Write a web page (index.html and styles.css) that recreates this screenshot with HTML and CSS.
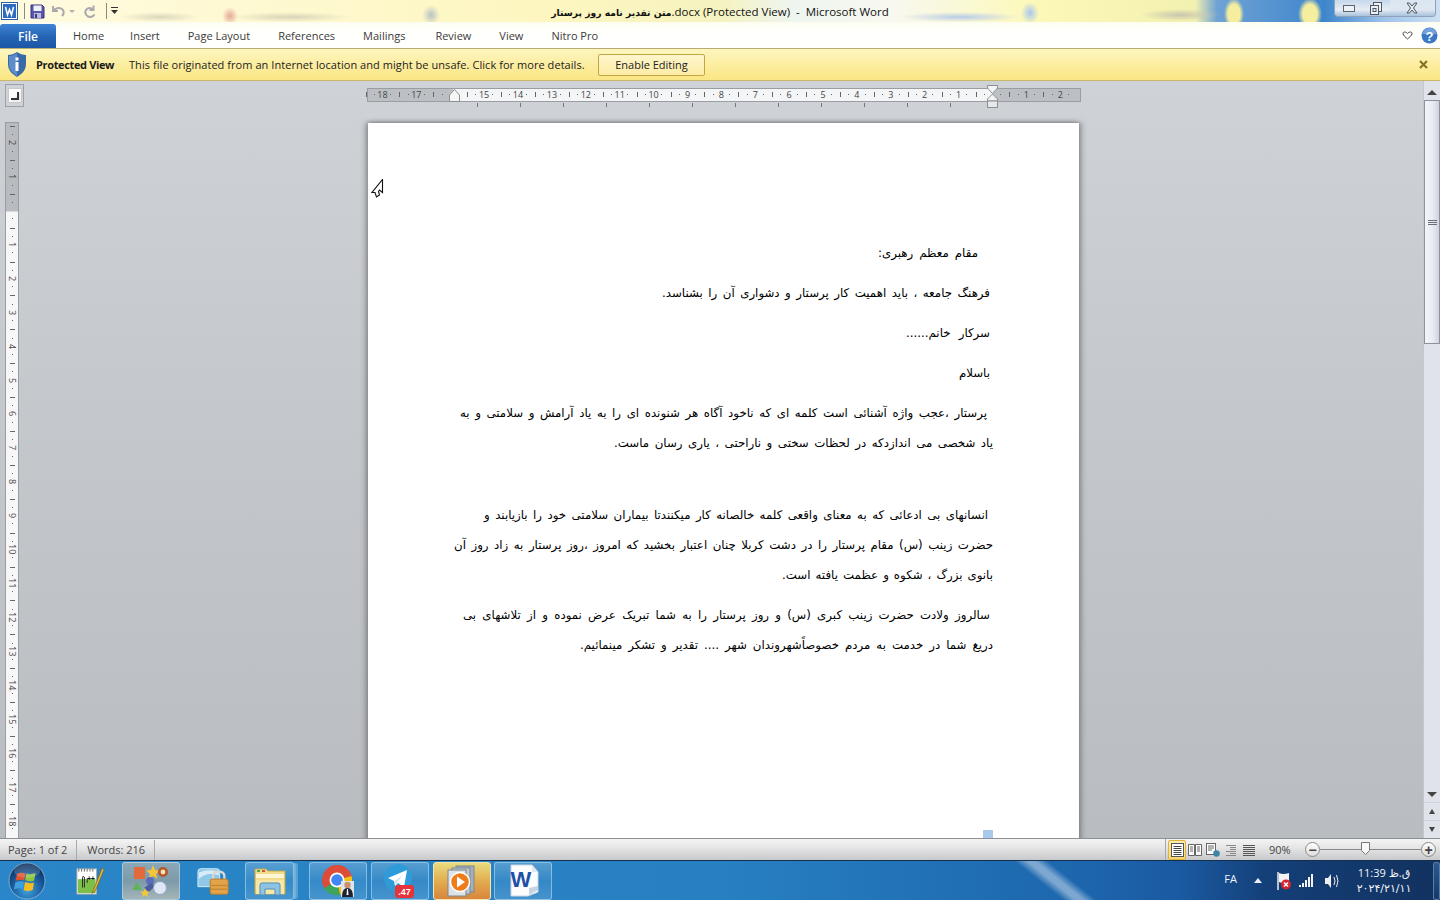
FILE: index.html
```html
<!DOCTYPE html>
<html lang="en">
<head>
<meta charset="utf-8">
<title>Microsoft Word</title>
<link rel="stylesheet" href="styles.css">
</head>
<body>
<header class="titlebar">
  <div class="qat">
    <svg class="ic-w" width="17" height="18" viewBox="0 0 17 18"><rect x=".5" y=".5" width="16" height="17" fill="#fff" stroke="#2b5fa8"/><rect x="2" y="2" width="13" height="14" fill="#2f6cc0"/><path d="M3.5 5l2 8 2-5.500 2 5.500 2-8" transform="translate(1)" fill="none" stroke="#fff" stroke-width="1.500"/></svg>
    <span class="qat-sep"></span>
    <svg class="ic-save" width="15" height="15" viewBox="0 0 15 15"><path d="M1 1h11l2 2v11H1z" fill="#5a57a8" stroke="#34327c"/><rect x="3.500" y="1.500" width="8" height="5.500" fill="#eef0fa"/><rect x="4" y="9" width="7" height="5" fill="#b9bce0"/><rect x="5" y="10" width="2" height="4" fill="#3c3a85"/></svg>
    <svg class="ic-undo" width="15" height="14" viewBox="0 0 15 14"><path d="M2 2v5h5M2.500 6.500C5 3.500 9 3 11.500 5.500c1.500 1.800 1.300 4.500-.5 6.500" fill="none" stroke="#a9a9ae" stroke-width="2"/></svg>
    <span class="qat-caret"></span>
    <svg class="ic-redo" width="14" height="14" viewBox="0 0 14 14"><path d="M10.500 1.500v4.500h-4M10 5.500C7.800 3.300 4.500 3.500 3 6c-1.400 2.500-.3 5 2 6.500 2.500 1 5 .3 6.500-2" fill="none" stroke="#a9a9ae" stroke-width="2"/></svg>
    <span class="qat-sep qat-sep-b"></span>
    <svg class="ic-cust" width="7" height="8" viewBox="0 0 7 8"><rect y="0" width="7" height="1" fill="#333"/><path d="M0 3h7L3.500 7z" fill="#333"/></svg>
  </div>
  <div class="doc-title"><bdi class="title-fa">متن تقدیر نامه روز پرستار</bdi><span>.docx (Protected View)&nbsp; -&nbsp; Microsoft Word</span></div>
  <div class="winctl">
    <span class="wbtn wbtn-min"><svg width="12" height="7" viewBox="0 0 12 7"><rect x=".5" y=".5" width="11" height="6" fill="#eef1f6" stroke="#5c6570"/></svg></span>
    <span class="wbtn wbtn-max"><svg width="12" height="13" viewBox="0 0 12 13"><rect x="3.500" y=".5" width="8" height="9" fill="#eef1f6" stroke="#4f5862"/><rect x=".5" y="3.500" width="8" height="9" fill="#eef1f6" stroke="#4f5862"/><rect x="3" y="6.500" width="3" height="3" fill="none" stroke="#4f5862"/></svg></span>
    <span class="wbtn wbtn-close"><svg width="14" height="12" viewBox="0 0 14 12"><path d="M2 1h2.500L7 4l2.500-3H12L8.500 6 12 11H9.500L7 8l-2.500 3H2L5.500 6z" fill="#e8ebf0" stroke="#4b5660"/></svg></span>
  </div>
</header>

<nav class="ribbon">
  <span class="tab-file">File</span>
  <div class="tabs">
    <span>Home</span><span>Insert</span><span>Page Layout</span><span>References</span><span>Mailings</span><span>Review</span><span>View</span><span>Nitro Pro</span>
  </div>
  <div class="ribbon-end">
    <svg width="11" height="9" viewBox="0 0 11 9"><path d="M1 2.500C1 .5 4 .5 5.500 2.500 7 .5 10 .5 10 2.500 10 4.500 7 6.500 5.500 8 4 6.500 1 4.500 1 2.500z" fill="#fff" stroke="#444"/></svg>
    <svg width="17" height="17" viewBox="0 0 17 17"><circle cx="8.500" cy="8.500" r="8" fill="#3b78c4"/><path d="M1.500 7a7 6 0 0 1 14 0z" fill="#8db4e6" opacity=".7"/><text x="8.500" y="13.500" text-anchor="middle" class="help-q">?</text></svg>
  </div>
</nav>

<section class="msgbar">
  <svg class="shield" width="18" height="25" viewBox="0 0 18 25"><path d="M9 0c3 2 6 3 9 3v9c0 6-4 10-9 13C4 22 0 18 0 12V3c3 0 6-1 9-3z" fill="#3a69a8"/><path d="M9 1v23C4.500 21 1 17.500 1 12V4c3 0 5.500-1 8-3z" fill="#5d8ccb"/><rect x="7.500" y="10" width="3" height="9" fill="#fff"/><rect x="7.500" y="5.500" width="3" height="3" fill="#fff"/></svg>
  <strong class="msg-title">Protected View</strong>
  <span class="msg-text">This file originated from an Internet location and might be unsafe. Click for more details.</span>
  <span class="msg-btn">Enable Editing</span>
  <svg class="msg-x" width="9" height="9" viewBox="0 0 9 9"><path d="M1 1l7 7M8 1L1 8" stroke="#8a7420" stroke-width="2.200"/></svg>
</section>

<main class="workspace">
  <aside class="rail">
    <span class="corner"><span class="corner-in"></span></span>
    <div class="v-ruler">
      <span>2</span><span>1</span><span></span><span>1</span><span>2</span><span>3</span><span>4</span><span>5</span><span>6</span><span>7</span><span>8</span><span>9</span><span>10</span><span>11</span><span>12</span><span>13</span><span>14</span><span>15</span><span>16</span><span>17</span><span>18</span>
    </div>
  </aside>

  <div class="canvas">
    <div class="h-ruler">
      <span>18</span><span>17</span><span></span><span>15</span><span>14</span><span>13</span><span>12</span><span>11</span><span>10</span><span>9</span><span>8</span><span>7</span><span>6</span><span>5</span><span>4</span><span>3</span><span>2</span><span>1</span><span></span><span>1</span><span>2</span>
      <svg class="mark-left" width="11" height="13" viewBox="0 0 11 13"><path d="M5.500 .5l5 5.500v6.500H.5V6z" fill="#f6f6f6" stroke="#8b8f94"/></svg>
      <svg class="mark-right" width="11" height="23" viewBox="0 0 11 23"><path d="M.5.5h10V3l-5 5.500L.5 3zM5.500 9l5 5v2H.5v-2z" fill="#f4f4f4" stroke="#8b8f94"/><rect x=".5" y="16" width="10" height="6.500" fill="#e8e8e8" stroke="#8b8f94"/></svg>
    </div>
    <article class="page" dir="rtl">
      <svg class="pointer" width="13" height="20" viewBox="0 0 13 20"><path d="M11.500 1v13l-3-2.500-1 1.500 1 3.500-3 2-1.500-4.500L1 14z" transform="translate(0 -.5)" fill="#fff" stroke="#111" stroke-width="1.100"/></svg>
      <p class="ln ln-a">مقام  معظم رهبری:</p>
      <p class="ln ln-b">فرهنگ جامعه ، باید اهمیت کار پرستار و دشواری آن را بشناسد.</p>
      <p class="ln ln-c">سرکار خانم......</p>
      <p class="ln ln-d">باسلام</p>
      <div class="para">
        <p class="ln ln-e">پرستار ،عجب واژه آشنائی است   کلمه ای که ناخود آگاه هر شنونده ای را به یاد  آرامش و سلامتی و به</p>
        <p class="ln ln-f">یاد شخصی می اندازدکه در لحظات سختی و ناراحتی ، یاری  رسان ماست.</p>
      </div>
      <div class="para para-gap">
        <p class="ln ln-g">انسانهای بی ادعائی که به معنای واقعی کلمه خالصانه کار میکنندتا بیماران سلامتی  خود را بازیابند و</p>
        <p class="ln ln-h">حضرت زینب (س) مقام پرستار را در دشت کربلا چنان اعتبار بخشید که امروز ،روز پرستار  به زاد روز آن</p>
        <p class="ln ln-i">بانوی بزرگ ، شکوه و عظمت یافته است.</p>
      </div>
      <div class="para">
        <p class="ln ln-j">سالروز ولادت حضرت زینب کبری (س) و روز پرستار را به شما تبریک عرض نموده و از  تلاشهای بی</p>
        <p class="ln ln-k">دریغ شما در خدمت به مردم خصوصاًشهروندان شهر .... تقدیر و تشکر  مینمائیم.</p>
      </div>
      <span class="page-mark"></span>
    </article>
  </div>

  <aside class="scroll">
    <span class="sb-btn"><i class="tri-up"></i></span>
    <span class="sb-thumb"><i></i><i></i><i></i></span>
    <span class="sb-track"></span>
    <span class="sb-btn sb-down"><i class="tri-down"></i></span>
    <span class="sb-btn sb-page"><i class="tri-up tri-s"></i></span>
    <span class="sb-btn sb-page"><i class="tri-down tri-s"></i></span>
  </aside>
</main>

<footer class="status">
  <span class="st-cell">Page: 1 of 2</span>
  <span class="st-cell">Words: 216</span>
  <div class="st-right">
    <span class="view view-on"><svg width="13" height="14" viewBox="0 0 13 14"><rect x=".5" y=".5" width="12" height="13" fill="#fff" stroke="#555"/><path d="M2.500 3.500h8M2.500 5.500h8M2.500 7.500h8M2.500 9.500h8M2.500 11.500h8" stroke="#444"/></svg></span>
    <span class="view"><svg width="14" height="13" viewBox="0 0 14 13"><path d="M.5 1.500h6v11h-6zM7.500 1.500h6v11h-6z" fill="#fff" stroke="#666"/><path d="M2 4h3M2 6h3M2 8h3M9 4h3M9 6h3M9 8h3" stroke="#666"/></svg></span>
    <span class="view"><svg width="14" height="14" viewBox="0 0 14 14"><rect x=".5" y=".5" width="9" height="11" fill="#fff" stroke="#666"/><path d="M2 3h6M2 5h6M2 7h4" stroke="#666"/><circle cx="10.500" cy="10.500" r="3.300" fill="#3d86a8"/></svg></span>
    <span class="view"><svg width="12" height="12" viewBox="0 0 12 12"><path d="M1 1.500h10M5 3.500h6M5 5.500h6M1 7.500h10M5 9.500h6M1 11.500h10" stroke="#888"/></svg></span>
    <span class="view"><svg width="12" height="12" viewBox="0 0 12 12"><path d="M0 1.500h12M0 3.500h12M0 5.500h12M0 7.500h12M0 9.500h12M0 11.500h12" stroke="#555"/></svg></span>
    <span class="zoom-pct">90%</span>
    <span class="zoom-btn">&minus;</span>
    <span class="zoom-track"><svg class="zoom-thumb" width="9" height="13" viewBox="0 0 9 13"><path d="M.5.5h8v8l-4 4-4-4z" fill="#f8f8f8" stroke="#777"/></svg></span>
    <span class="zoom-btn">+</span>
  </div>
</footer>

<footer class="taskbar">
  <svg class="orb" width="38" height="38" viewBox="0 0 38 38"><defs><radialGradient id="orbg" cx=".5" cy=".75" r=".7"><stop offset="0" stop-color="#3fa4de"/><stop offset=".6" stop-color="#1a5a9c"/><stop offset="1" stop-color="#0c2f5c"/></radialGradient></defs><circle cx="19" cy="19" r="18" fill="url(#orbg)" stroke="#9fc4e2" stroke-opacity=".7"/><path d="M9 12q4-2 8.500-.5l-1.300 7q-4-1.500-8.700.5z" fill="#e2532d"/><path d="M18.500 11.500q4 1.500 9-.5l-1.300 7.500q-4.500 2-9-.5z" fill="#8cc63f"/><path d="M7.300 20.500q4.500-2 8.700-.5l-1.300 7q-4-1.500-8.700.5z" fill="#3fa0e0"/><path d="M17 20q4.500 2 9 .5L24.700 28q-4.500 2-9 .3z" fill="#f5bd1f"/><ellipse cx="19" cy="9" rx="13" ry="7" fill="#fff" opacity=".16"/></svg>

  <span class="tb tb-plain tb-np"><svg width="30" height="32" viewBox="0 0 30 32"><rect x="1" y="3" width="21" height="27" fill="#fff" stroke="#aaa"/><rect x="2" y="14" width="19" height="15" fill="#7cc04a"/><path d="M3 3v3M6 3v3M9 3v3M12 3v3M15 3v3M18 3v3" stroke="#666"/><path d="M7 23V12q0-2 2 0v11M12 18v-5" stroke="#222" fill="none"/><text x="12" y="16" class="np-t">++</text><path d="M28 2L19 25l-2 4 3.500-2L30 4z" fill="#e8b83a" stroke="#7a5a10" stroke-width=".7"/></svg></span>

  <span class="tb tb-on"><svg width="40" height="34" viewBox="0 0 40 34"><rect x="3" y="3" width="11" height="12" fill="#e26a3a"/><path d="M22 1l2 5 5 .5-4 3.500 1.500 5-4.500-3-4.500 3L19 10l-4-3.500 5-.5z" fill="#f3c63c"/><circle cx="32" cy="8" r="5" fill="#b8562c"/><circle cx="32" cy="8" r="2.400" fill="#f2e4b4"/><path d="M6 18l5 8H1z" fill="#62b25d"/><circle cx="19" cy="17" r="4" fill="#5b6cb8"/><path d="M13 24l7-5 4 3-6 6z" fill="#4a5d9c"/><circle cx="29" cy="24" r="6.500" fill="#dfe6f4" stroke="#92a4c8"/><path d="M10 26l1.500 3.500 3.500.3-2.700 2.200.8 3-3.100-1.800L7 35l.8-3-2.700-2.200 3.500-.3z" transform="translate(4 -2)" fill="#f3c63c"/></svg></span>

  <span class="tb tb-plain tb-lock"><svg width="36" height="32" viewBox="0 0 36 32"><path d="M1 6q0-3 3-3h17q3 0 3 3v16H1z" fill="#8fc8e8" stroke="#d9eef8"/><path d="M2 7q10-4 21-1v4Q10 6 2 14z" fill="#e8f5fb" opacity=".8"/><path d="M17 15v-4q0-5 6-5t6 5v4" fill="none" stroke="#d8d8d8" stroke-width="2.500"/><rect x="14" y="14" width="19" height="16" rx="2" fill="#e2a34b" stroke="#b97b25"/><rect x="15" y="20" width="17" height="1.500" fill="#c78930"/><rect x="15" y="24" width="17" height="1.500" fill="#c78930"/></svg></span>

  <span class="tb tb-stack"><svg width="32" height="30" viewBox="0 0 32 30"><path d="M1 3h11l2 2h17v23H1z" fill="#f2dc8b" stroke="#c2a94f"/><rect x="3" y="4" width="3" height="2" fill="#4caa4c"/><rect x="8" y="4" width="3" height="2" fill="#d2553f"/><rect x="2" y="8" width="28" height="4" fill="#fdf6d2"/><rect x="2" y="14" width="28" height="14" fill="#f7e6a4"/><path d="M6 29v-10q0-2 2-2h16q2 0 2 2v10h-5v-6H11v6z" fill="#8ec3e4" stroke="#4c8fbd"/></svg></span>

  <span class="tb"><svg width="34" height="34" viewBox="0 0 34 34"><circle cx="16" cy="16" r="15" fill="#dd4b39"/><path d="M16 16L3 24.500A15 15 0 0 0 19 30.700z" fill="#3ba55c"/><path d="M16 16l3 14.700A15 15 0 0 0 30.500 12z" fill="#f4c20d"/><path d="M16 1a15 15 0 0 1 14.500 11H16z" fill="#dd4b39"/><circle cx="16" cy="16" r="7.500" fill="#fff"/><circle cx="16" cy="16" r="5.800" fill="#4285f4"/><rect x="20" y="17" width="13" height="16" fill="#dfe3ea"/><circle cx="26.500" cy="21" r="3.200" fill="#c99372"/><path d="M21 33q0-9 5.500-9t5.500 9z" fill="#1d2330"/><path d="M26 25l1 0 .5 6h-2z" fill="#fff"/></svg></span>

  <span class="tb"><svg width="38" height="36" viewBox="0 0 38 36"><circle cx="17" cy="15" r="14" fill="#2f9bd8"/><path d="M7 15l19-8-3 17-6-4-3 3-1-5z" fill="#fff"/><path d="M14 18l8-6-6 7-1 4z" fill="#c9dff0"/><rect x="14" y="22" width="19" height="13" rx="3" fill="#e5343c"/><text x="23.500" y="32" text-anchor="middle" class="tg-t">.47</text></svg></span>

  <span class="tb tb-hot"><svg width="30" height="32" viewBox="0 0 30 32"><rect x="9" y="1" width="18" height="26" fill="#a6b0b8" stroke="#7b8791"/><rect x="5" y="3" width="18" height="26" fill="#c2cad0" stroke="#7b8791"/><rect x="1" y="5" width="18" height="26" fill="#dfe3e6" stroke="#7b8791"/><circle cx="13" cy="17" r="9.500" fill="#ef7b1a" stroke="#fff" stroke-width="1.500"/><path d="M10 11.500l8 5.500-8 5.500z" fill="#fff"/></svg></span>

  <span class="tb tb-word"><svg width="32" height="33" viewBox="0 0 32 33"><path d="M4 1h21l6 7v20l-10 4H4z" fill="#fdfdfe" stroke="#c8d4e2"/><path d="M22 31l9-5v-4l-9 2z" fill="#c7d3e2"/><path d="M25 1v7h6" fill="#dfe7f1"/><text x="14" y="23" text-anchor="middle" class="wd-t">W</text></svg></span>

  <div class="tray">
    <span class="tray-lang">FA</span>
    <i class="tray-tri"></i>
    <svg class="tray-ic tray-flag" width="14" height="18" viewBox="0 0 14 18"><path d="M1 0v18" stroke="#eee" stroke-width="1.500"/><path d="M2 1q4 2 10 0v9q-6 2-10 0z" fill="#f4f4f4"/><circle cx="9" cy="12.500" r="5" fill="#d9242c"/><path d="M7 10.500l4 4M11 10.500l-4 4" stroke="#fff" stroke-width="1.500"/></svg>
    <svg class="tray-ic tray-sig" width="15" height="13" viewBox="0 0 15 13"><path d="M1 11h2v2H1zM4 9h2v4H4zM7 6h2v7H7zM10 3h2v10h-2zM13 0h2v13h-2z" fill="#f2f2f2"/></svg>
    <svg class="tray-ic tray-vol" width="14" height="16" viewBox="0 0 14 16"><path d="M0 5h3l3-4v14l-3-4H0z" fill="#eee"/><path d="M9 4q2 4 0 8M11.500 2q3 6 0 12" fill="none" stroke="#eee"/></svg>
    <div class="clock">
      <span class="clock-t">11:39 ق.ظ</span>
      <span class="clock-d">۲۰۲۴/۲۱/۱۱</span>
    </div>
    <span class="show-desk"></span>
  </div>
</footer>
</body>
</html>
```

FILE: styles.css
```css
* { box-sizing: border-box; }
html, body { margin: 0; height: 100%; }
body {
  width: 1440px;
  height: 900px;
  overflow: hidden;
  display: flex;
  flex-direction: column;
  font-family: "Open Sans", "DejaVu Sans", sans-serif;
  font-size: 11px;
  color: #3b3b3b;
  background: #c9cdd1;
}

/* title bar */
.titlebar {
  height: 22px;
  flex: none;
  display: grid;
  grid-template-columns: 1fr auto 1fr;
  align-items: start;
  background:
    radial-gradient(ellipse 10px 16px at 1234px 14px, #f4ee9e 60%, transparent 100%),
    radial-gradient(ellipse 12px 16px at 1310px 14px, #f4ee9e 60%, transparent 100%),
    radial-gradient(ellipse 40px 6px at 1180px 15px, #c9c6ae, transparent),
    radial-gradient(ellipse 9px 11px at 1030px 13px, #a8c6ec, transparent),
    radial-gradient(ellipse 60px 5px at 960px 17px, #b9cce8, transparent),
    radial-gradient(ellipse 8px 9px at 230px 16px, #e6a89a, transparent),
    radial-gradient(ellipse 60px 5px at 290px 17px, #d8d4b8, transparent),
    radial-gradient(ellipse 40px 5px at 160px 17px, #dcd8bc, transparent),
    radial-gradient(ellipse 9px 10px at 431px 15px, #b9c3c4, transparent),
    linear-gradient(90deg, #fffbe0 0, #fdf6c0 38%, #f6f3c0 50%, #eef5ef 55%, #f8f8f0 62%, #fcf9b8 72%, #f3f1b0 83%, #6fa2d4 84.500%, #3e86cc 92%, #9cc2ea 96%, #cfe0f4 100%);
}
.qat { display: flex; align-items: center; height: 22px; padding-left: 1px; }
.ic-w { margin-right: 3px; }
.qat-sep { width: 1px; height: 16px; background: #8a8a80; margin: 0 5px 0 3px; }
.ic-save { margin-right: 6px; }
.ic-undo { margin-right: 3px; }
.qat-caret { width: 0; height: 0; border: 3px solid transparent; border-top: 3px solid #b0b0b0; border-bottom: 0; margin-right: 8px; }
.qat-sep-b { margin: 0 4px 0 9px; }
.doc-title {
  font-size: 11.500px;
  color: #111;
  line-height: 24px;
  white-space: nowrap;
}
.title-fa { font-family: "DejaVu Sans", sans-serif; font-weight: 700; font-size: 9.200px; }
.winctl {
  justify-self: end;
  margin-right: 4px;
  width: 102px;
  height: 17px;
  display: flex;
  border: 1px solid #8ea3b8;
  border-top: 0;
  border-radius: 0 0 4px 4px;
  background: linear-gradient(180deg, #c6d8ea, #e6edf5 60%, #a9c2dc);
}
.wbtn { display: flex; align-items: center; justify-content: center; width: 28px; }
.wbtn-close { width: 46px; background: linear-gradient(180deg, rgba(255,255,255,.35), rgba(170,195,220,.3)); }

/* ribbon tabs */
.ribbon {
  height: 26px;
  flex: none;
  display: flex;
  align-items: stretch;
  background: linear-gradient(180deg, #fdfcf0 0, #fffffb 30%, #ffffff 100%);
}
.tab-file {
  width: 56px;
  margin-top: 2px;
  display: flex;
  align-items: center;
  justify-content: center;
  color: #fff;
  font-size: 12px;
  font-weight: 600;
  border-radius: 3px 3px 0 0;
  background: linear-gradient(180deg, #3f85d3 0, #2463b4 55%, #1c57a5 100%);
}
.tabs { display: flex; align-items: center; gap: 28px; padding-left: 17px; flex: 1; white-space: nowrap; }
.tabs span:first-child { margin-right: -2px; }
.tabs span:nth-child(5) { margin-right: 2px; }
.ribbon-end { display: flex; align-items: center; gap: 8px; padding-right: 2px; }
.help-q { font: 700 13px "Liberation Sans", sans-serif; fill: #fff; }

/* protected view bar */
.msgbar {
  height: 33px;
  flex: none;
  display: flex;
  align-items: center;
  padding-left: 8px;
  border-top: 1px solid #b8ab72;
  border-bottom: 1px solid #c8b868;
  background: linear-gradient(180deg, #fdf5bf 0, #fceea4 45%, #fbe684 100%);
  color: #222;
}
.msg-title { margin-left: 10px; font-weight: 700; color: #1a1a1a; width: 93px; flex: none; white-space: nowrap; letter-spacing: -.36px; }
.msg-text { width: 469px; flex: none; white-space: nowrap; letter-spacing: .055px; }
.msg-btn {
  width: 107px;
  height: 22px;
  flex: none;
  display: flex;
  align-items: center;
  justify-content: center;
  border: 1px solid #c2a645;
  border-radius: 2px;
  background: linear-gradient(180deg, #fef6cc, #fdeca5);
  color: #222;
}
.msg-x { margin-left: auto; margin-right: 12px; }

/* workspace */
.workspace {
  flex: 1;
  min-height: 0;
  display: grid;
  grid-template-columns: 26px 1fr 17px;
  background: linear-gradient(180deg, #cfd2d6 0, #c5c8cc 40%, #b9bcc0 100%);
  overflow: hidden;
}
.rail { display: flex; flex-direction: column; padding: 3px 0 0 5px; min-height: 0; }
.corner { width: 19px; height: 23px; border: 1px solid #9ea2a7; display: flex; align-items: center; justify-content: center; flex: none; }
.corner-in { width: 14px; height: 15px; background: linear-gradient(135deg, #fff 0 60%, #eee 60%); border: 1px solid #c8c8c8; position: relative; display: block; }
.corner-in::after { content: ""; position: absolute; right: 2px; bottom: 2px; width: 6px; height: 6px; border-right: 2px solid #333; border-bottom: 2px solid #333; }
.v-ruler {
  width: 14px;
  margin-top: 15px;
  flex: 1;
  display: flex;
  flex-direction: column;
  padding-top: 3px;
  border: 1px solid #9a9ea3;
  border-bottom: 0;
  background: linear-gradient(180deg, #b8bbc0 0 88px, #f7f7f7 89px);
  overflow: hidden;
}
.v-ruler span {
  height: 33.9px;
  flex: none;
  display: flex;
  align-items: center;
  justify-content: center;
  writing-mode: vertical-rl;
  font-size: 9px;
  color: #4a4a4a;
  background:
    linear-gradient(#666, #666) center 25%/1px 1px no-repeat,
    linear-gradient(#666, #666) center 75%/1px 1px no-repeat,
    linear-gradient(#666, #666) center 0/5px 1px no-repeat;
}

.canvas { display: flex; flex-direction: column; align-items: center; min-width: 0; min-height: 0; overflow: hidden; }
.h-ruler {
  position: relative;
  flex: none;
  width: 714px;
  height: 14px;
  margin-top: 7px;
  margin-left: -2px;
  margin-bottom: 21px;
  display: flex;
  border: 1px solid #9a9ea3;
  background: linear-gradient(90deg, #bcc0c4 0 85px, #f4f5f6 86px 624px, #bcc0c4 625px);
}
.h-ruler::after {
  content: "";
  position: absolute;
  left: 109px;
  width: 474px;
  top: 14px;
  height: 4px;
  background: repeating-linear-gradient(90deg, #777 0 1px, transparent 1px 43px);
}
.h-ruler span {
  width: 33.9px;
  flex: none;
  font-size: 9px;
  line-height: 12px;
  text-align: center;
  color: #444;
  background:
    linear-gradient(#666, #666) 25% 5px/1px 1px no-repeat,
    linear-gradient(#666, #666) 75% 5px/1px 1px no-repeat,
    linear-gradient(#666, #666) 0 3px/1px 5px no-repeat;
}
.h-ruler span:first-child { margin-left: -2px; }
.mark-left { position: absolute; left: 81px; top: 0; }
.mark-right { position: absolute; left: 619px; top: -4px; }

.page {
  position: relative;
  flex: none;
  width: 711px;
  height: 800px;
  margin-left: -2px;
  padding: 115px 86px 0 85px;
  background: #fff;
  box-shadow: -3px 0 5px rgba(90,90,95,.45), 3px 0 5px rgba(90,90,95,.45), 0 -1px 3px rgba(90,90,95,.3);
  color: #000;
  font-family: "DejaVu Sans", sans-serif;
  font-size: 11.800px;
}
.pointer { position: absolute; left: 3px; top: 56px; }
.page-mark { position: absolute; left: 615px; top: 707px; width: 10px; height: 10px; background: #a9c9ec; }
.ln { margin: 0 0 10px; line-height: 30px; height: 30px; text-align: justify; text-align-last: justify; }
.para .ln { margin-bottom: 0; }
.para { margin-bottom: 10px; }
.para-gap { margin-top: 42px; }
.ln-a { width: 100px; margin-right: 15px; }
.ln-b { width: 328px; margin-right: 3px; }
.ln-c { width: 84px; margin-right: 3px; }
.ln-d { width: 33px; margin-right: 3px; }
.ln-e { width: 527px; margin-right: 6px; }
.ln-f { width: 379px; }
.ln-g { width: 504px; margin-right: 5px; }
.ln-h { width: 539px; }
.ln-i { width: 211px; }
.ln-j { width: 527px; margin-right: 3px; }
.ln-k { width: 413px; }

/* scrollbar */
.scroll { display: flex; flex-direction: column; background: #e0e3ea; border-left: 1px solid #c4c7cc; padding-top: 3px; }
.sb-btn { height: 16px; flex: none; display: flex; align-items: center; justify-content: center; }
.tri-up, .tri-down { width: 0; height: 0; border-left: 5px solid transparent; border-right: 5px solid transparent; display: block; }
.tri-up { border-bottom: 5px solid #444; }
.tri-down { border-top: 5px solid #444; }
.tri-s { border-left-width: 3px; border-right-width: 3px; }
.sb-thumb {
  height: 244px;
  flex: none;
  display: flex;
  flex-direction: column;
  align-items: center;
  justify-content: center;
  gap: 1px;
  border: 1px solid #8f929a;
  background: linear-gradient(90deg, #f4f6fa, #e8ebf2 55%, #cfd3dc);
}
.sb-thumb i { width: 9px; height: 1px; background: #6a6e76; display: block; }
.sb-track { flex: 1; }
.sb-down { height: 16px; }
.sb-page { height: 18px; border-top: 1px solid #cfd2d8; }

/* status bar */
.status {
  height: 22px;
  flex: none;
  display: flex;
  align-items: center;
  border-top: 1px solid #8c8f94;
  background: linear-gradient(180deg, #f4f4f4 0, #e6e6e6 40%, #c8c9cc 100%);
  color: #444;
}
.st-cell { padding: 0 9px 0 8px; line-height: 20px; border-right: 1px solid #a7a9ad; flex: none; }
.st-cell + .st-cell { padding-left: 10px; }
.st-right { margin-left: auto; display: flex; align-items: center; height: 21px; border-left: 1px solid #a7a9ad; padding-left: 2px; padding-right: 4px; }
.view { width: 18px; height: 20px; display: flex; align-items: center; justify-content: center; }
.view-on { background: linear-gradient(180deg, #fdeeb0, #fbd56e); border: 1px solid #e0b13c; border-radius: 2px; }
.zoom-pct { margin-left: 11px; width: 22px; }
.zoom-btn {
  width: 15px;
  height: 15px;
  margin-left: 14px;
  border: 1px solid #8a8a8a;
  border-radius: 50%;
  display: flex;
  align-items: center;
  justify-content: center;
  font: 700 14px/1 "Liberation Sans", sans-serif;
  color: #444;
  background: linear-gradient(180deg, #fff, #dcdcdc);
}
.zoom-track { width: 101px; height: 1px; background: #8a8a8a; position: relative; display: block; }
.zoom-thumb { position: absolute; left: 41px; top: -7px; }
.zoom-track + .zoom-btn { margin-left: 0; }

/* taskbar */
.taskbar {
  height: 40px;
  flex: none;
  display: flex;
  align-items: center;
  padding-left: 8px;
  border-top: 1px solid #14304f;
  background:
    linear-gradient(38.660deg, transparent 0 664px, rgba(255,255,255,.42) 672px 677px, transparent 685px),
    linear-gradient(90deg, #2a86c8 0, #2780c2 50%, #1d66ae 75%, #1a5aa2 82%, #143f78 88%, #12325f 100%);
}
.orb { flex: none; margin-right: 29px; }
.tb {
  width: 58px;
  height: 38px;
  margin-left: 4px;
  flex: none;
  display: flex;
  align-items: center;
  justify-content: center;
  border: 1px solid rgba(190,225,245,.55);
  border-radius: 3px;
  background: linear-gradient(180deg, rgba(255,255,255,.22), rgba(255,255,255,.06) 50%, rgba(255,255,255,.14));
}
.tb-plain { border-color: transparent; background: none; }
.tb-np { width: 30px; margin-left: 0; margin-right: 17px; }
.tb-on { margin-left: 0; background: linear-gradient(180deg, #8aa8b8, #7d9aa8 50%, #a3b5b8); }
.tb-lock { width: 36px; margin: 0 13px 0 16px; }
.tb-stack { width: 49px; margin-left: 0; margin-right: 11px; box-shadow: 3px 0 0 -1px rgba(120,180,220,.8), 5px 0 0 -1px rgba(120,180,220,.6); }
.tb-hot { background: linear-gradient(180deg, #e8dc7c, #e2a84c 55%, #d8863c); border-color: #f3e7b0; }
.tb-word { margin-left: 3px; }
.np-t { font: 700 7px "Liberation Sans", sans-serif; fill: #111; }
.tg-t { font: 700 9px "Liberation Sans", sans-serif; fill: #fff; }
.wd-t { font: 700 22px "Liberation Sans", sans-serif; fill: #1f4fa8; }

.tray { margin-left: auto; display: flex; align-items: center; height: 38px; color: #f2f5f9; }
.tray-lang { font-size: 11px; margin-right: 17px; margin-top: -5px; }
.tray-tri { width: 0; height: 0; border-left: 4px solid transparent; border-right: 4px solid transparent; border-bottom: 5px solid #eef; margin-right: 15px; display: block; }
.tray-ic { flex: none; }
.tray-flag { margin-right: 7px; }
.tray-sig { margin-right: 12px; }
.tray-vol { margin-right: 3px; }
.clock { width: 66px; margin-left: 9px; display: flex; flex-direction: column; align-items: center; font-size: 11px; line-height: 16px; font-family: "DejaVu Sans", sans-serif; white-space: nowrap; }
.clock-t { font-family: "Open Sans", "DejaVu Sans", sans-serif; font-size: 11px; }
.clock-d { font-size: 11px; }
.show-desk { width: 7px; height: 38px; margin-left: 16px; border: 1px solid #5c7ca4; border-radius: 2px; background: linear-gradient(180deg, #2a5a92, #123a6a); }
```
